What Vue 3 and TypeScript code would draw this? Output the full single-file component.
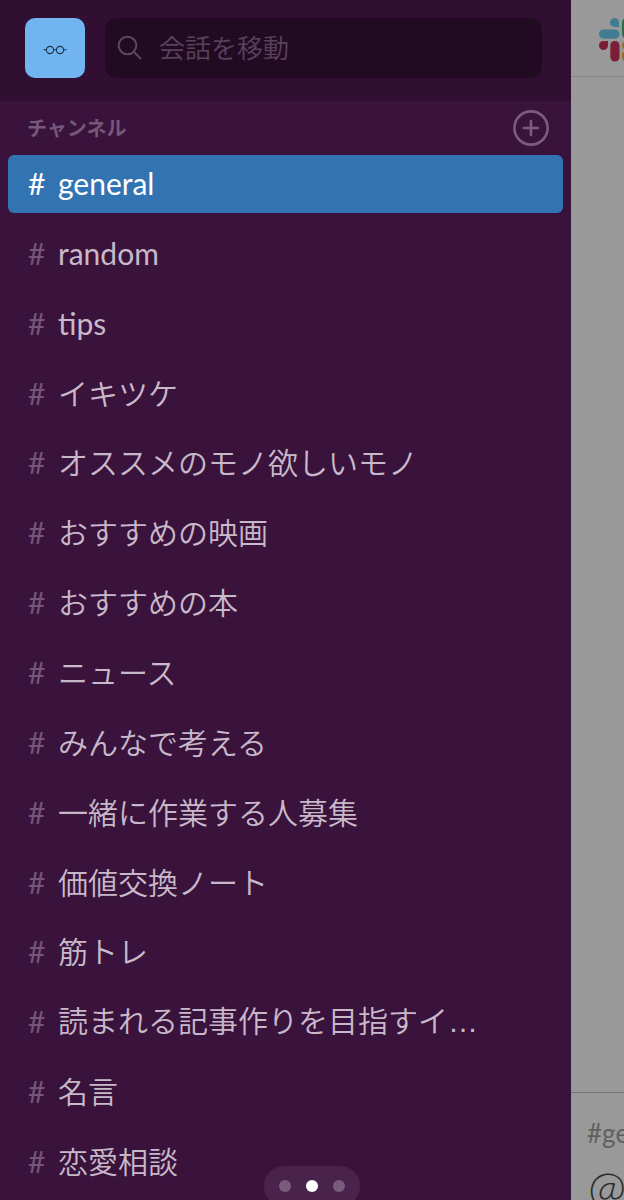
<script setup lang="ts">
import { ref } from 'vue'

interface Channel {
  name: string
  cut?: boolean
}

const channels: Channel[] = [
  { name: 'general' },
  { name: 'random' },
  { name: 'tips' },
  { name: 'イキツケ' },
  { name: 'オススメのモノ欲しいモノ' },
  { name: 'おすすめの映画' },
  { name: 'おすすめの本' },
  { name: 'ニュース' },
  { name: 'みんなで考える' },
  { name: '一緒に作業する人募集' },
  { name: '価値交換ノート' },
  { name: '筋トレ' },
  { name: '読まれる記事作りを目指すイ', cut: true },
  { name: '名言' },
  { name: '恋愛相談' },
]
const active = ref('general')
const query = ref('')
const page = ref(1)
</script>

<template>
  <div class="app">
    <aside class="sidebar">
      <header class="top">
        <button class="workspace" type="button" aria-label="ワークスペース">
          <svg width="24" height="10" viewBox="0 0 24 10" fill="none" stroke="#1d3347" stroke-width="1.1">
            <circle cx="7" cy="5" r="3.6" />
            <circle cx="17" cy="5" r="3.6" />
            <path d="M.5 4.800H3.400M10.600 4.800H13.400M20.600 4.800H23.500" />
          </svg>
        </button>
        <div class="search">
          <svg width="26" height="26" viewBox="0 0 26 26" fill="none" stroke="#5e4560" stroke-width="2">
            <circle cx="10.500" cy="10.500" r="8.800" />
            <path d="M16.800 16.800L24 24" />
          </svg>
          <input v-model="query" type="text" placeholder="会話を移動" aria-label="会話を移動" />
        </div>
      </header>

      <div class="section">
        <h2>チャンネル</h2>
        <button class="add" type="button" aria-label="チャンネルを追加">
          <svg width="36" height="36" viewBox="0 0 36 36" fill="none" stroke="#7b5c80" stroke-width="2.600" stroke-linecap="round">
            <circle cx="18" cy="18" r="16.600" />
            <path d="M18 11V25M11 18H25" />
          </svg>
        </button>
      </div>

      <ul class="channels">
        <li v-for="channel in channels" :key="channel.name">
          <button
            type="button"
            class="channel"
            :class="{ active: channel.name === active }"
            @click="active = channel.name"
          >
            <span class="hash">#</span>
            <span class="name">{{ channel.name }}<span v-if="channel.cut" class="dots">…</span></span>
          </button>
        </li>
      </ul>

      <nav class="pager" aria-label="ページ">
        <button
          v-for="n in 3"
          :key="n"
          type="button"
          :class="{ on: n - 1 === page }"
          :aria-label="`ページ ${n}`"
          @click="page = n - 1"
        ></button>
      </nav>
    </aside>

    <main class="conversation">
      <header class="bar">
        <svg width="44" height="44" viewBox="0 0 44 44">
          <path fill="#417d92" d="M15.500 0A4.500 4.500 0 0 1 20 4.500V9H15.500A4.500 4.500 0 0 1 15.500 0Z" />
          <rect fill="#417d92" x="0" y="11.500" width="20.500" height="9.200" rx="4.600" />
          <path fill="#7b1f37" d="M4.500 23H9V27.500A4.500 4.500 0 1 1 4.500 23Z" />
          <rect fill="#7b1f37" x="11.300" y="23" width="9.200" height="20.500" rx="4.600" />
          <rect fill="#27704d" x="23" y="0" width="9.200" height="20.500" rx="4.600" />
          <path fill="#27704d" d="M34.500 20.500V16A4.500 4.500 0 1 1 39 20.500Z" />
          <rect fill="#97701e" x="23" y="23" width="20.500" height="9.200" rx="4.600" />
          <path fill="#97701e" d="M23 34.500H27.500A4.500 4.500 0 1 1 23 39Z" />
        </svg>
      </header>
      <div class="messages"></div>
      <footer class="composer">
        <input type="text" placeholder="#general" aria-label="#general" />
        <button class="mention" type="button">@</button>
      </footer>
    </main>
  </div>
</template>

<style>
body {
  margin: 0;
}
</style>

<style scoped>
.app {
  display: flex;
  min-height: 100vh;
  overflow: hidden;
  background: #999;
  font-family: Lato, "Noto Sans CJK JP DemiLight", "Noto Sans CJK JP", sans-serif;
  font-size: 30px;
}
button {
  border: 0;
  padding: 0;
  background: none;
  font: inherit;
  color: inherit;
}
svg {
  display: block;
}
.sidebar {
  position: relative;
  display: flex;
  flex-direction: column;
  flex: 1;
  min-width: 0;
  background: #3a133c;
}
.top {
  display: flex;
  gap: 20px;
  padding: 18px 29px 23px 25px;
  background: #310f33;
}
.workspace {
  display: flex;
  flex: none;
  align-items: center;
  justify-content: center;
  width: 60px;
  height: 60px;
  padding-top: 4px;
  border-radius: 10px;
  background: #70b5ef;
}
.search {
  display: flex;
  flex: 1;
  align-items: center;
  gap: 16px;
  min-width: 0;
  height: 60px;
  padding: 0 12px;
  box-sizing: border-box;
  border-radius: 12px;
  background: #220a23;
}
.search svg {
  flex: none;
}
.search input {
  flex: 1;
  min-width: 0;
  padding: 0;
  border: 0;
  outline: 0;
  background: none;
  font-family: inherit;
  font-size: 26px;
  color: #cfc2d0;
}
.search input::placeholder {
  color: #5a415c;
  opacity: 1;
}
.section {
  display: flex;
  align-items: center;
  justify-content: space-between;
  height: 48px;
  padding: 6px 22px 0 27px;
  box-sizing: border-box;
}
.section h2 {
  margin: 0;
  font-family: Lato, "Noto Sans CJK JP", sans-serif;
  font-size: 20px;
  line-height: 28px;
  font-weight: 700;
  color: #75577a;
}
.channels {
  display: grid;
  flex: 1;
  grid-auto-rows: minmax(58px, 1fr);
  margin: 0;
  padding: 0 8px 3px;
  list-style: none;
}
.channels li {
  display: flex;
  align-items: center;
  min-width: 0;
}
.channel {
  display: flex;
  align-items: center;
  width: 100%;
  height: 58px;
  padding: 0 20px 2px;
  border-radius: 6px;
  line-height: 40px;
  text-align: left;
  color: #c8b9ca;
}
.hash {
  flex: none;
  width: 30px;
  color: #755679;
}
.name {
  min-width: 0;
  overflow: hidden;
  text-overflow: ellipsis;
  white-space: nowrap;
}
.dots {
  font-family: "Liberation Sans", sans-serif;
}
.channel.active {
  background: #3274b2;
}
.channel.active,
.channel.active .hash {
  color: #fff;
}
.pager {
  position: absolute;
  bottom: -6px;
  left: calc(50% + 26px);
  display: flex;
  align-items: center;
  justify-content: center;
  gap: 15px;
  width: 96px;
  height: 40px;
  transform: translateX(-50%);
  border-radius: 20px;
  background: #4a234c;
}
.pager button {
  width: 12px;
  height: 12px;
  border-radius: 50%;
  background: #795c7c;
}
.pager .on {
  background: #fff;
}
.conversation {
  display: flex;
  flex: none;
  flex-direction: column;
  width: 53px;
  overflow: hidden;
  background: #999;
}
.bar {
  padding: 18px 28px 14px;
  border-bottom: 1px solid #858585;
}
.messages {
  flex: 1;
}
.composer {
  display: flex;
  flex-direction: column;
  align-items: flex-start;
  gap: 10px;
  height: 108px;
  padding: 20px 0 0 16px;
  box-sizing: border-box;
  overflow: hidden;
  border-top: 1px solid #737373;
}
.composer input {
  flex: none;
  width: 100%;
  height: 40px;
  padding: 0;
  border: 0;
  outline: 0;
  background: none;
  font-family: inherit;
  font-size: 26px;
  color: #333;
}
.composer input::placeholder {
  color: #606060;
  opacity: 1;
}
.mention {
  flex: none;
  padding-left: 1px;
  font-size: 46px;
  font-weight: 300;
  line-height: 48px;
  color: #2b2b2b;
}
</style>
